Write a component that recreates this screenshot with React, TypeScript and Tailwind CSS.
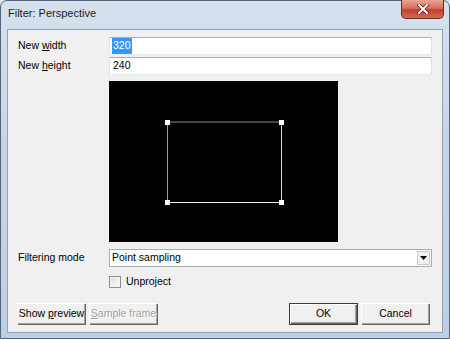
import React from 'react';

const ui = { fontFamily: '"Liberation Sans", Arial, sans-serif' };

function Field({ children }: { children: React.ReactNode }) {
  return (
    <div className="h-[18px] bg-white border border-[#abadb3] border-l-[#e2e3ea] border-r-[#dbdfe6] border-b-[#e3e9ef] flex items-center pl-[2px] text-black">
      {children}
    </div>
  );
}

function Button({ children, primary, disabled, className = '' }: { children: React.ReactNode; primary?: boolean; disabled?: boolean; className?: string }) {
  return (
    <div
      className={
        'h-[22px] w-[69px] flex items-center justify-center bg-[#f0f0f0] whitespace-nowrap ' +
        (primary
          ? 'border border-[#3c3c3c] shadow-[inset_1px_1px_0_#ffffff,inset_-1px_-1px_0_#696969,inset_-2px_-2px_0_#a0a0a0] '
          : 'shadow-[inset_1px_1px_0_#ffffff,inset_-1px_-1px_0_#696969,inset_-2px_-2px_0_#a0a0a0] ') +
        (disabled ? 'text-[#a0a0a0] [text-shadow:1px_1px_0_#ffffff] ' : 'text-black ') +
        className
      }
    >
      <span>{children}</span>
    </div>
  );
}

export default function App() {
  return (
    <div className="w-[450px] h-[339px] bg-[#dfe6ee]" style={ui}>
      <div className="w-[450px] h-[339px] flex flex-col rounded-t-[7px] border border-[#52667e] bg-[linear-gradient(180deg,#d6e1ed_0%,#c7d6e6_40%,#bccfe3_100%)]">
        {/* title bar */}
        <div className="h-[28px] flex items-start relative">
          <div className="pl-[7px] pt-[7px] text-[11px] text-[#1b1b1b] leading-none">Filter: Perspective</div>
          <div className="absolute right-[5px] top-[-1px] w-[43px] h-[19px] rounded-b-[5px] border border-[#6b2a22] border-t-0 bg-[linear-gradient(180deg,#e9a496_0%,#d8705f_45%,#c2402c_55%,#d46a55_100%)] flex items-center justify-center">
            <svg width="12" height="10" viewBox="0 0 12 10">
              <path d="M2 1 L10 9 M10 1 L2 9" stroke="#5a1f18" strokeWidth="3.6" strokeLinecap="square" />
              <path d="M2 1 L10 9 M10 1 L2 9" stroke="#ffffff" strokeWidth="2" strokeLinecap="square" />
            </svg>
          </div>
        </div>

        {/* client area */}
        <div className="flex-1 mx-[6px] mb-[5px] border border-[#8fa2b6] bg-[#f0f0f0] flex flex-col pt-[7px] text-[10.5px] text-black">
          <div className="grid grid-cols-[101px_1fr] pr-[10px] gap-y-[2px] items-center">
            <div className="pl-[10px]">New <u className="underline-offset-1">w</u>idth</div>
            <Field>
              <span className="bg-[#3399ff] text-white px-[1px]">320</span>
            </Field>
            <div className="pl-[10px]">New <u className="underline-offset-1">h</u>eight</div>
            <Field>
              <span className="px-[1px]">240</span>
            </Field>
          </div>

          <div className="ml-[101px] mt-[6px] w-[229px] h-[161px] bg-black">
            <svg width="229" height="161" viewBox="0 0 229 161">
              <line x1="58" y1="41" x2="172" y2="41" stroke="#8a8a8a" strokeWidth="1" />
              <line x1="58.5" y1="41" x2="58.5" y2="121" stroke="#9a9a9a" strokeWidth="1" />
              <line x1="172.5" y1="41" x2="172.5" y2="121" stroke="#d8d8d8" strokeWidth="1" />
              <line x1="58" y1="121.5" x2="172" y2="121.5" stroke="#f2f2f2" strokeWidth="1" />
              <rect x="56" y="39" width="5" height="5" fill="#ffffff" />
              <rect x="170" y="39" width="5" height="5" fill="#ffffff" />
              <rect x="56" y="119" width="5" height="5" fill="#ffffff" />
              <rect x="170" y="119" width="5" height="5" fill="#ffffff" />
            </svg>
          </div>

          <div className="grid grid-cols-[101px_1fr] pr-[10px] mt-[7px] items-center">
            <div className="pl-[10px]">Filtering mode</div>
            <div className="h-[18px] bg-white border border-[#a5acb5] flex items-center pl-[2px] relative">
              <span>Point sampling</span>
              <div className="absolute right-[1px] top-[1px] w-[13px] h-[14px] bg-[#f0f0f0] border border-[#c8c8c8] flex items-center justify-center">
                <svg width="7" height="4" viewBox="0 0 7 4">
                  <path d="M0 0 H7 L3.5 4 Z" fill="#000" />
                </svg>
              </div>
            </div>
          </div>

          <div className="ml-[101px] mt-[7px] flex items-center gap-[5px]">
            <div className="w-[12px] h-[12px] border border-[#8e8f8f] bg-[linear-gradient(135deg,#dcdcdc,#ffffff)] shadow-[inset_0_0_0_1px_#f4f4f4]" />
            <span>Unproject</span>
          </div>

          <div className="mt-[13px] flex items-center pl-[9px] pr-[12px]">
            <Button>Show <u className="underline-offset-1">p</u>review</Button>
            <Button disabled className="ml-[3px]"><u className="underline-offset-1">S</u>ample frame</Button>
            <div className="flex-1" />
            <Button primary>OK</Button>
            <Button className="ml-[3px] w-[67px]">Cancel</Button>
          </div>
        </div>
      </div>
    </div>
  );
}
